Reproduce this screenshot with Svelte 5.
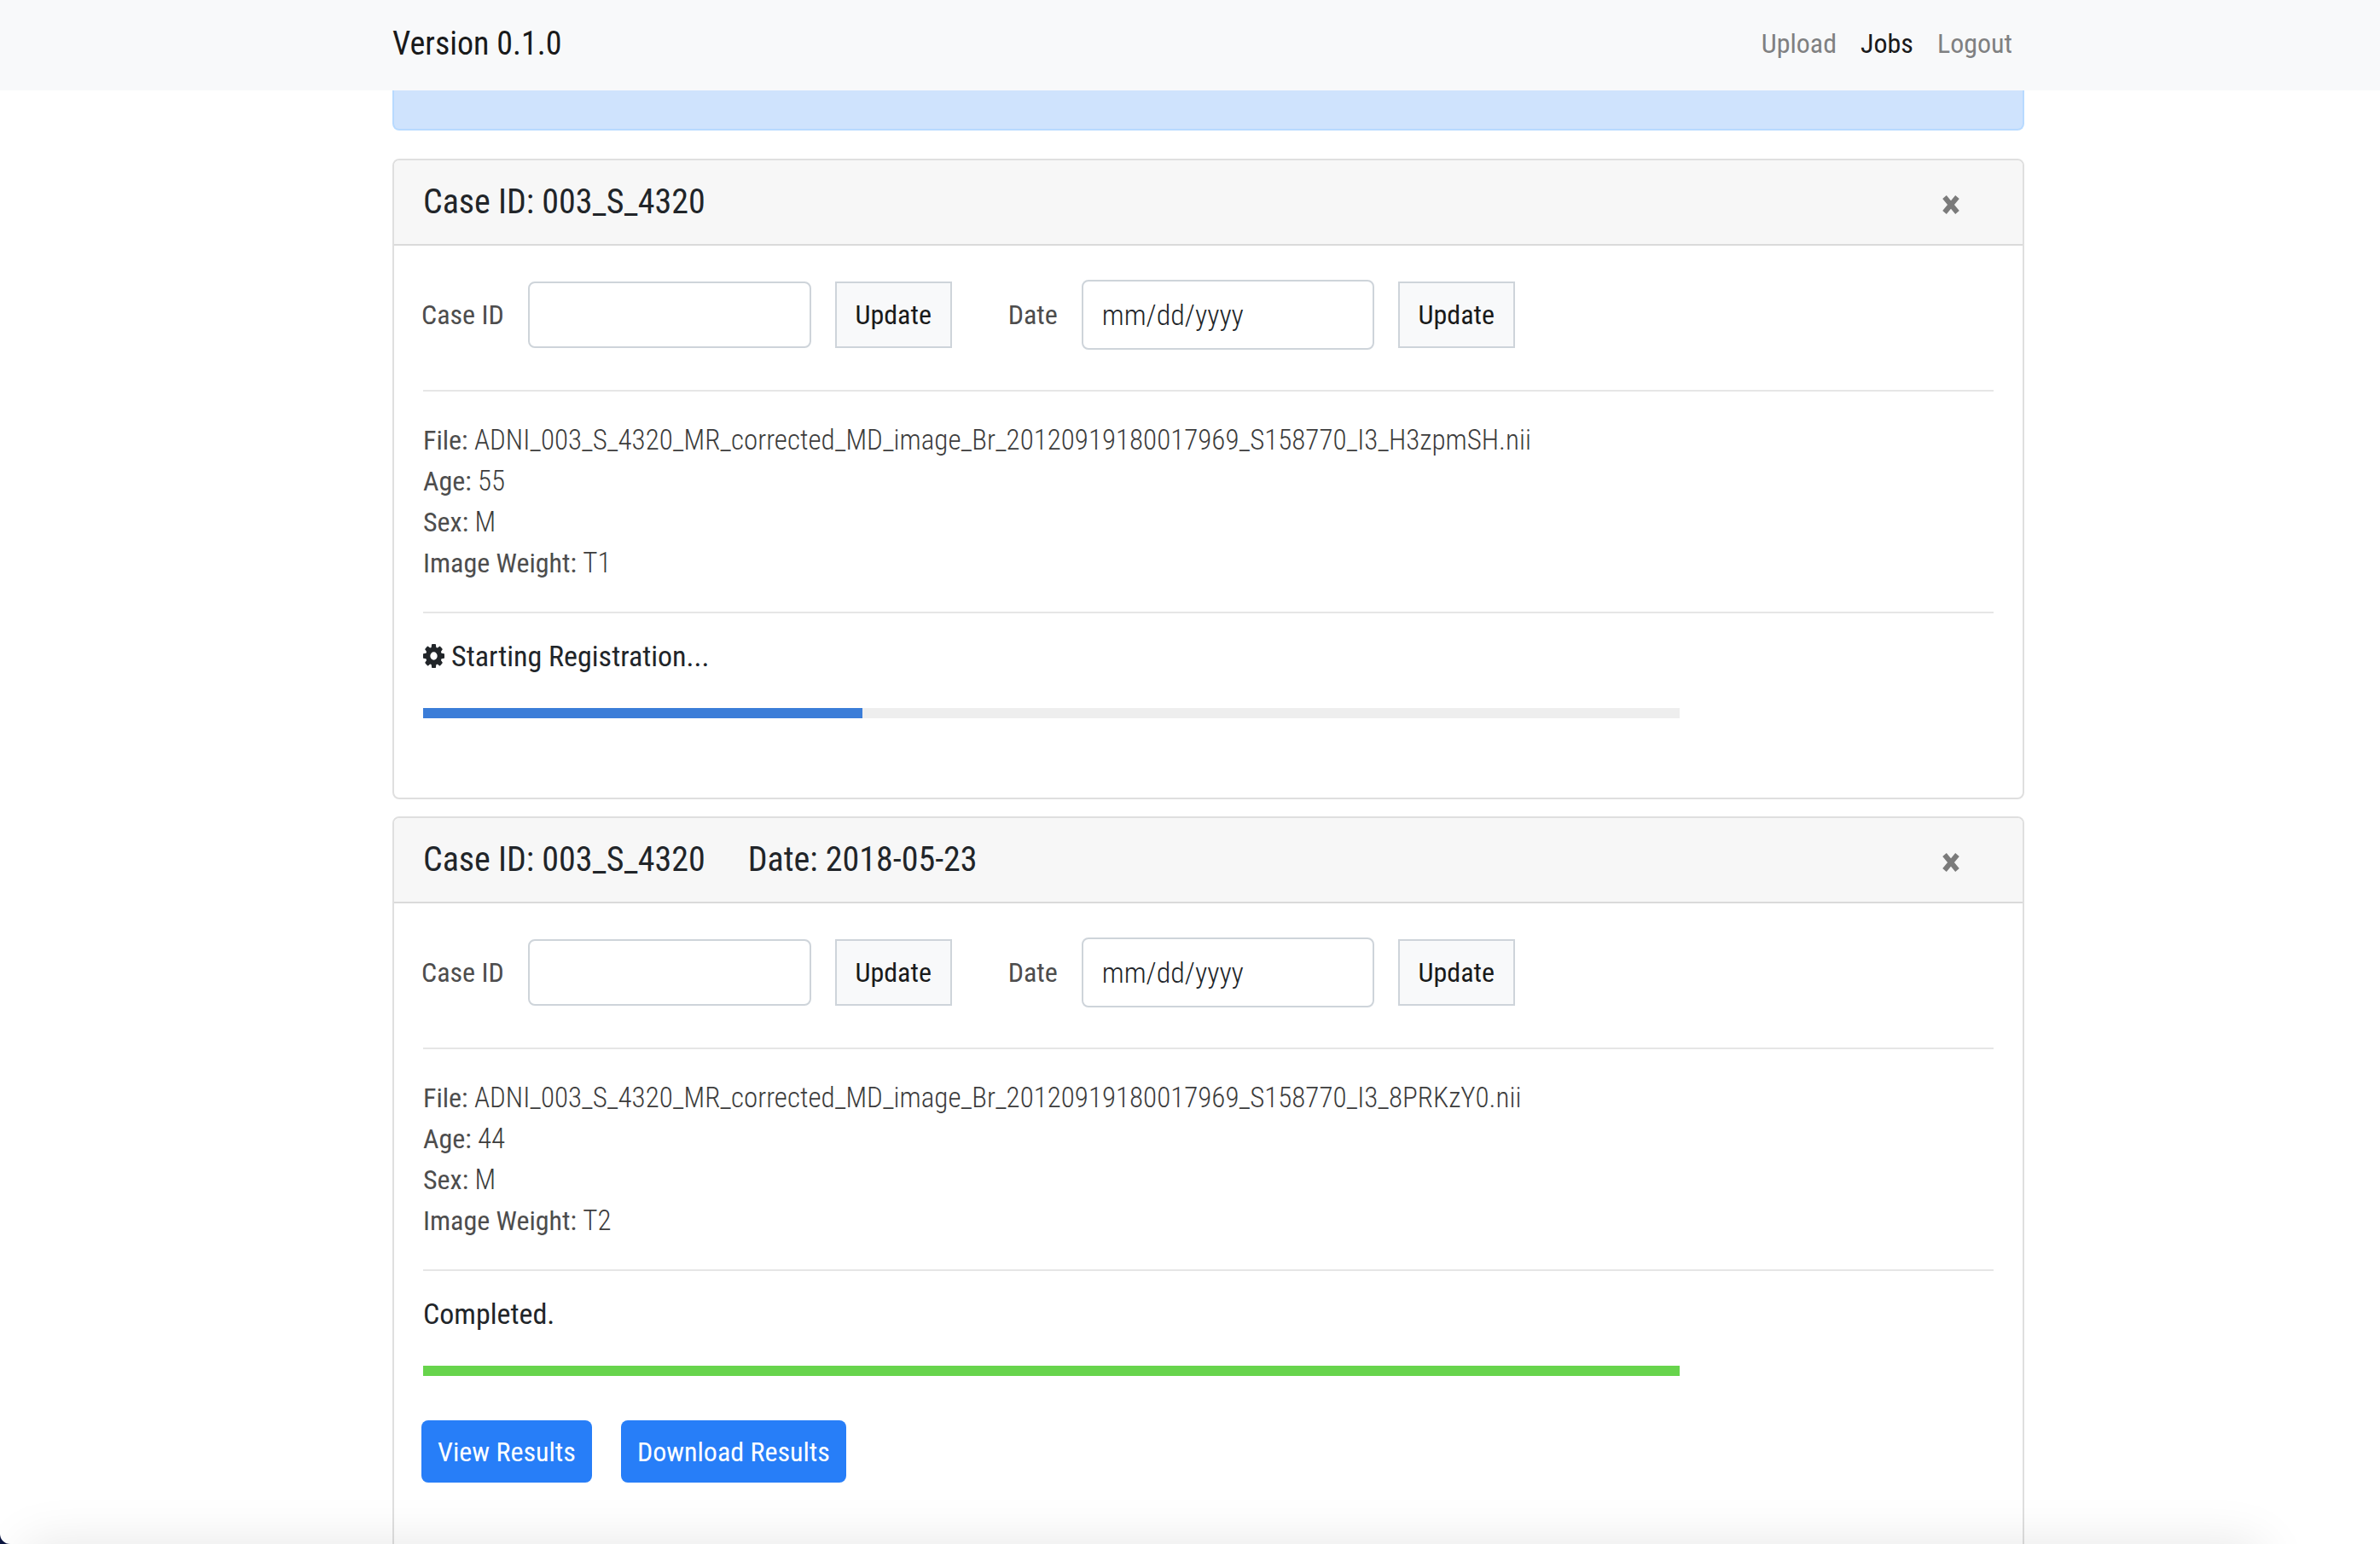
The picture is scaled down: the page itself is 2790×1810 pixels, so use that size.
<script>
  const jobs = [
    {
      id: 'job-1',
      caseId: '003_S_4320',
      date: '',
      file: 'ADNI_003_S_4320_MR_corrected_MD_image_Br_20120919180017969_S158770_I3_H3zpmSH.nii',
      age: 55,
      sex: 'M',
      weight: 'T1',
      status: 'Starting Registration...',
      progress: 35,
      done: false
    },
    {
      id: 'job-2',
      caseId: '003_S_4320',
      date: '2018-05-23',
      file: 'ADNI_003_S_4320_MR_corrected_MD_image_Br_20120919180017969_S158770_I3_8PRKzY0.nii',
      age: 44,
      sex: 'M',
      weight: 'T2',
      status: 'Completed.',
      progress: 100,
      done: true
    }
  ];
</script>

<div class="page">
  <header class="navbar">
    <div class="container bar">
      <a class="brand" href="#home">Version 0.1.0</a>
      <nav class="links">
        <a href="#upload">Upload</a>
        <a href="#jobs" class="active" aria-current="page">Jobs</a>
        <a href="#logout">Logout</a>
      </nav>
    </div>
  </header>

  <main class="container">
    <div class="alert" role="status"></div>

    {#each jobs as job (job.id)}
      <article class="card">
        <div class="card-header">
          <h2>
            <span>Case ID: {job.caseId}</span>
            {#if job.date}<span>Date: {job.date}</span>{/if}
          </h2>
          <button class="close" type="button" aria-label="Remove job">
            <svg viewBox="0 0 20 24" aria-hidden="true">
              <path d="M2.500 3L17.500 21M17.500 3L2.500 21" />
            </svg>
          </button>
        </div>
        <div class="card-body">
          <form class="edit">
            <div class="group">
              <label for="{job.id}-case">Case ID</label>
              <input class="case" id="{job.id}-case" type="text" />
              <button class="update" type="button">Update</button>
            </div>
            <div class="group">
              <label for="{job.id}-date">Date</label>
              <input class="date" id="{job.id}-date" type="text" placeholder="mm/dd/yyyy" />
              <button class="update" type="button">Update</button>
            </div>
          </form>
          <dl class="facts">
            <div><dt>File:</dt> <dd>{job.file}</dd></div>
            <div><dt>Age:</dt> <dd>{job.age}</dd></div>
            <div><dt>Sex:</dt> <dd>{job.sex}</dd></div>
            <div><dt>Image Weight:</dt> <dd>{job.weight}</dd></div>
          </dl>
          <div class="status">
            {#if !job.done}
              <svg class="gear" viewBox="0 0 1536 1536" preserveAspectRatio="none" aria-hidden="true">
                <path d="M1024 768q0-106-75-181t-181-75-181 75-75 181 75 181 181 75 181-75 75-181zm512-109v222q0 12-8 23t-20 13l-185 28q-19 54-39 91 35 50 107 138 10 12 10 25t-9 23q-27 37-99 108t-94 71q-12 0-26-9l-138-108q-44 23-91 38-16 136-29 186-7 28-36 28H657q-14 0-24.500-8.500T621 1506l-28-184q-49-16-90-37l-141 107q-10 9-25 9-14 0-25-11-126-114-165-168-7-10-7-23 0-12 8-23 15-21 51-66.500t54-70.500q-27-50-41-99L29 913q-13-2-21-12.500T0 877V655q0-12 8-23t19-13l186-28q14-46 39-92-40-57-107-138-10-12-10-24 0-10 9-23 26-36 98.500-107.500T337 135q13 0 26 10l138 107q44-23 91-38 16-136 29-186 7-28 36-28h222q14 0 24.500 8.500T915 30l28 184q49 16 90 37l142-107q9-9 24-9 13 0 25 10 129 119 165 170 7 8 7 22 0 12-8 23-15 21-51 66.500t-54 70.500q26 50 41 98l183 28q13 2 21 12.500t8 23.500z" />
              </svg>
            {/if}
            <span>{job.status}</span>
          </div>
          <div class="track" role="progressbar" aria-label="Job progress" aria-valuenow={job.progress} aria-valuemin="0" aria-valuemax="100">
            <div class="fill" class:complete={job.done} style="width: {job.progress}%"></div>
          </div>
          {#if job.done}
            <div class="actions">
              <button type="button">View Results</button>
              <button type="button">Download Results</button>
            </div>
          {/if}
        </div>
      </article>
    {/each}
  </main>
  <div class="fade"></div>
</div>

<style>
  :global(body) {
    margin: 0;
    background: #0b1540;
    overflow: hidden;
  }
  .page {
    height: 100vh;
    overflow: hidden;
    position: relative;
    background: #fff;
    border-bottom-left-radius: 12px;
    font-family: 'Roboto Condensed', Roboto, 'Liberation Sans', sans-serif;
    font-size: 32px;
    line-height: 48px;
    color: #212529;
  }
  .page :is(input, button) {
    font: inherit;
    box-sizing: border-box;
  }
  .container {
    box-sizing: border-box;
    max-width: 1956px;
    margin: 0 auto;
    padding-left: 43px;
  }
  .navbar {
    background: #f8f9fa;
  }
  .bar {
    display: flex;
    align-items: center;
    justify-content: space-between;
    height: 106px;
    padding-right: 14px;
    padding-bottom: 4px;
  }
  .bar a {
    text-decoration: none;
    color: #7f8081;
  }
  .bar .brand {
    font-size: 38px;
    color: #191a1a;
  }
  .links {
    display: flex;
    gap: 28px;
  }
  .bar .active {
    color: #191a1a;
  }
  .alert {
    height: 45px;
    margin-bottom: 33px;
    background: #cfe3fd;
    border: solid #b8daff;
    border-width: 0 2px 2px;
    border-radius: 0 0 8px 8px;
  }
  .card {
    border: 2px solid #dfdfdf;
    border-radius: 8px;
    margin-bottom: 20px;
    min-height: 747px;
  }
  .card-header {
    display: flex;
    align-items: center;
    justify-content: space-between;
    height: 98px;
    padding: 0 74px 0 34px;
    background: #f7f7f7;
    border-bottom: 2px solid #dadada;
    border-radius: 6px 6px 0 0;
  }
  h2 {
    display: flex;
    gap: 50px;
    margin: 0;
    font-size: 40px;
    font-weight: 450;
  }
  .close {
    display: flex;
    padding: 6px 0 0;
    border: 0;
    background: none;
  }
  .close svg {
    width: 20px;
    height: 24px;
  }
  .close path {
    stroke: #7b7b7b;
    stroke-width: 6;
  }
  .card-body {
    padding: 41px 34px 0;
  }
  .edit {
    display: flex;
    gap: 66px;
    height: 128px;
    margin-left: -2px;
  }
  .group {
    display: flex;
    align-items: center;
    gap: 28px;
    height: 80px;
    color: #4d4d4d;
  }
  .edit input {
    height: 78px;
    padding: 0 22px;
    border: 2px solid #ced4da;
    border-radius: 8px;
    background: #fff;
    color: #495057;
  }
  .edit .case {
    width: 332px;
  }
  .edit .date {
    width: 343px;
    height: 82px;
    font-size: 34px;
    font-weight: 300;
  }
  .edit input::placeholder {
    color: #212529;
    opacity: 1;
  }
  .update {
    width: 137px;
    height: 78px;
    padding: 0;
    border: 2px solid #ced4da;
    background: #f8f9fa;
    color: #191a1a;
  }
  .facts {
    margin: 0;
    padding: 33px 0;
    border: solid #e6e6e6;
    border-width: 2px 0;
    color: #4d4d4d;
  }
  dt,
  dd {
    display: inline;
    margin: 0;
  }
  dd {
    color: #3c3c3c;
    font-size: 33px;
    font-weight: 300;
  }
  .status {
    display: flex;
    align-items: center;
    gap: 8px;
    margin: 26px 0 37px;
    font-size: 34px;
  }
  .gear {
    width: 25px;
    height: 28px;
    fill: #212529;
  }
  .track {
    width: 80%;
    height: 12px;
    background: #eee;
  }
  .fill {
    height: 12px;
    background: #3b7dd8;
  }
  .fill.complete {
    background: #67d44c;
  }
  .actions {
    display: flex;
    gap: 34px;
    margin-left: -2px;
    padding: 52px 0 80px;
  }
  .actions button {
    height: 73px;
    padding: 0 19px;
    border: 0;
    border-radius: 8px;
    background: #277ef8;
    color: #fff;
  }
  .fade {
    position: absolute;
    inset: auto 140px -120px 30px;
    height: 120px;
    box-shadow: 0 0 60px rgb(0 0 0 / 10%);
    pointer-events: none;
  }
</style>
